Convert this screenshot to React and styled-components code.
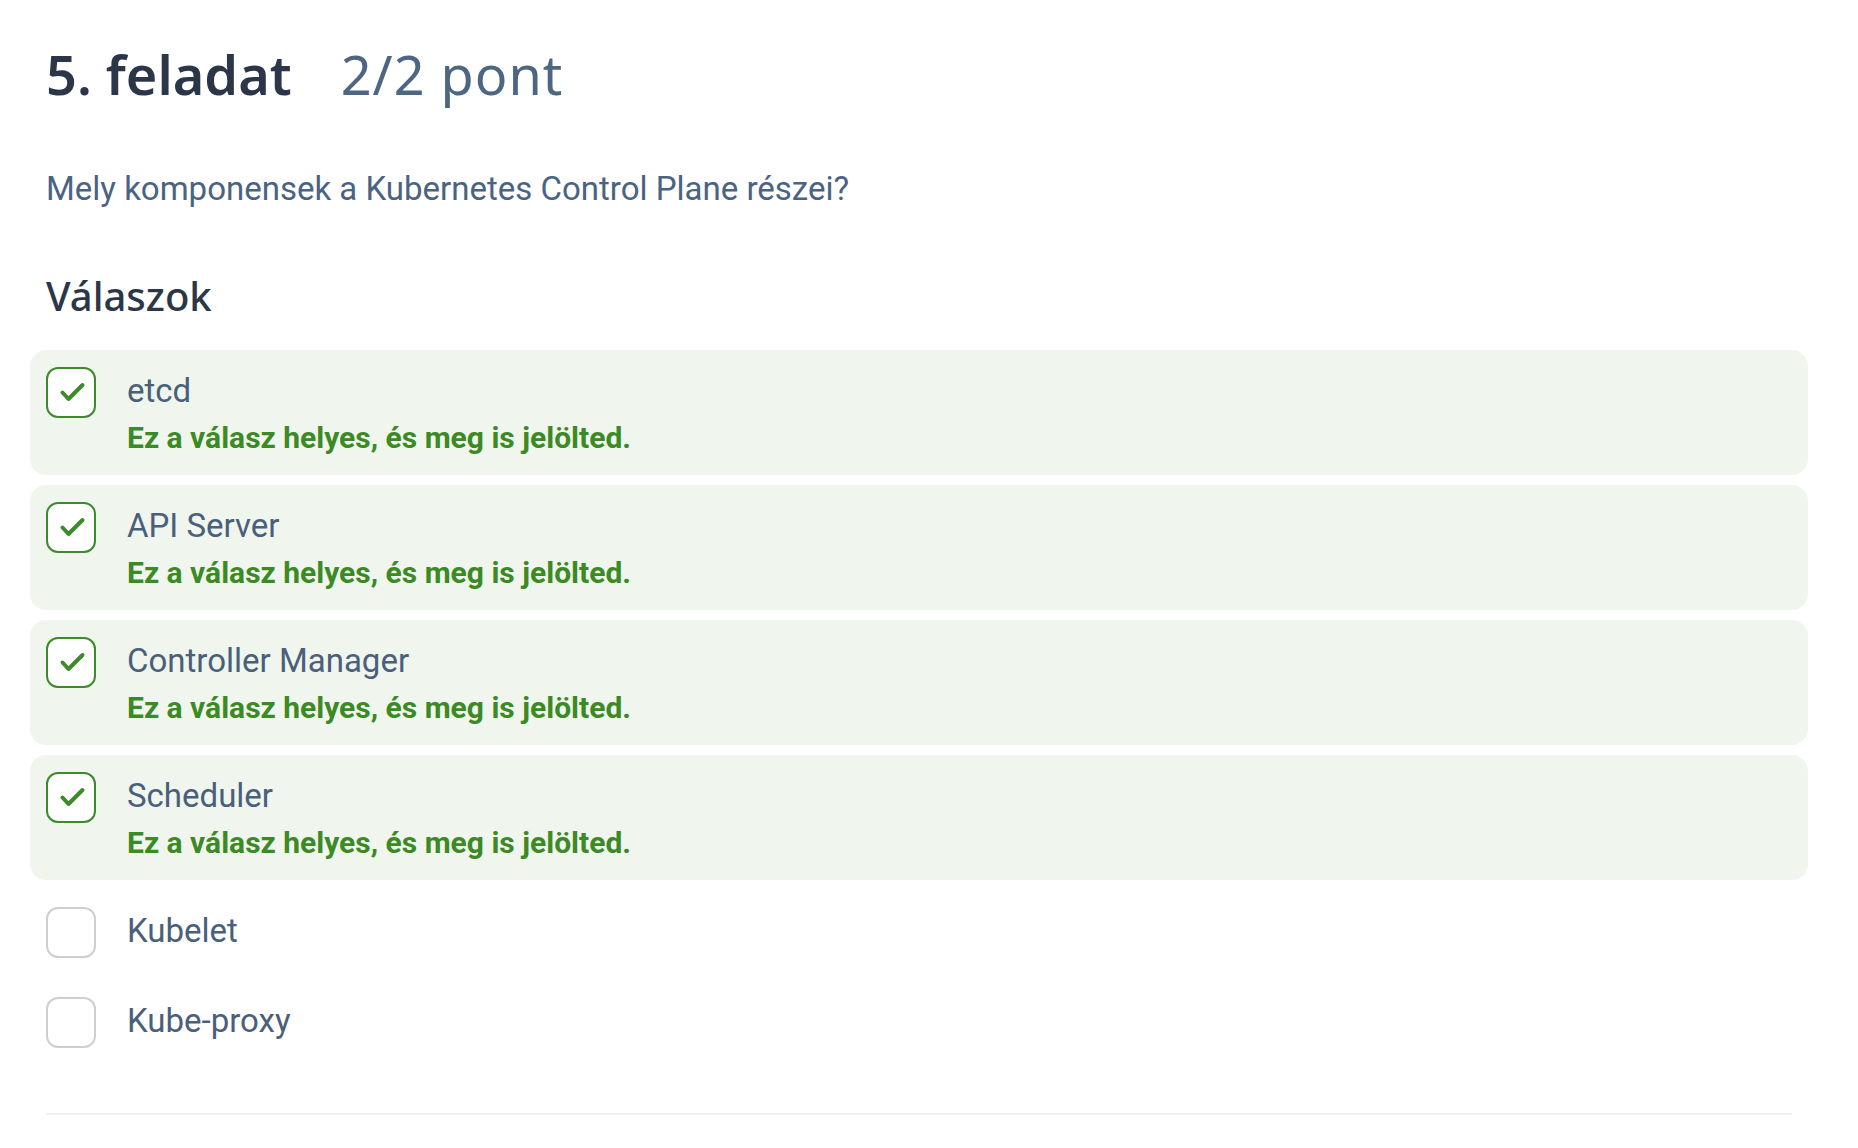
import React from "react";
import styled, { createGlobalStyle } from "styled-components";

const Global = createGlobalStyle`
  html, body { margin: 0; padding: 0; background: #ffffff; }
  body { font-family: Roboto, "Liberation Sans", sans-serif; }
`;

const Page = styled.main`
  padding: 29px 66px 0 46px;
  display: flex;
  flex-direction: column;
`;

const TitleRow = styled.h1`
  margin: 0;
  display: flex;
  align-items: baseline;
  gap: 49px;
  font-family: "Noto Sans", "DejaVu Sans", sans-serif;
  font-size: 54px;
  line-height: 90px;
`;

const TaskNo = styled.span`
  color: #2c3649;
  font-weight: 600;
`;

const Points = styled.span`
  color: #4d6681;
  font-weight: 400;
  letter-spacing: 1px;
`;

const Question = styled.p`
  margin: 47px 0 0;
  color: #4a6383;
  font-size: 33px;
  line-height: 46px;
`;

const SectionTitle = styled.h2`
  margin: 54px 0 0;
  font-family: "Noto Sans", "DejaVu Sans", sans-serif;
  color: #2c3649;
  font-weight: 500;
  font-size: 40px;
  line-height: 60px;
`;

const List = styled.ul`
  list-style: none;
  margin: 24px -16px 0;
  padding: 0;
  display: flex;
  flex-direction: column;
  gap: 10px;
`;

const Row = styled.li`
  display: flex;
  align-items: flex-start;
  gap: 31px;
  padding: 15px 16px 12px;
  border-radius: 16px;
  background: ${(p) => (p.$correct ? "#f0f6ee" : "transparent")};
`;

const Box = styled.span`
  flex: none;
  box-sizing: border-box;
  width: 50px;
  height: 51px;
  margin-top: 2px;
  border-radius: 12px;
  border: 2px solid ${(p) => (p.$checked ? "#3d8a2b" : "#cfcfcf")};
  background: #ffffff;
  display: flex;
`;

const Body = styled.div`
  display: flex;
  flex-direction: column;
  padding: 2px 0 3px;
`;

const Label = styled.span`
  color: #4a5f7b;
  font-size: 33px;
  line-height: 48px;
`;

const Feedback = styled.span`
  color: #3b8a24;
  font-weight: 700;
  font-size: 30px;
  line-height: 45px;
`;

const Divider = styled.hr`
  margin: 53px 0 0;
  border: none;
  height: 2px;
  background: #f0f0f0;
`;

const Check = () => (
  <svg width="46" height="47" viewBox="2 2 46 47" fill="none">
    <polyline
      points="16.5,25.5 22.5,32 36.5,18"
      stroke="#3d8a2b"
      strokeWidth="4"
      strokeLinecap="round"
      strokeLinejoin="round"
    />
  </svg>
);

const answers = [
  { label: "etcd", checked: true },
  { label: "API Server", checked: true },
  { label: "Controller Manager", checked: true },
  { label: "Scheduler", checked: true },
  { label: "Kubelet", checked: false },
  { label: "Kube-proxy", checked: false },
];

export default function App() {
  return (
    <>
      <Global />
      <Page>
        <TitleRow>
          <TaskNo>5. feladat</TaskNo>
          <Points>2/2 pont</Points>
        </TitleRow>
        <Question>Mely komponensek a Kubernetes Control Plane részei?</Question>
        <SectionTitle>Válaszok</SectionTitle>
        <List>
          {answers.map((a) => (
            <Row key={a.label} $correct={a.checked}>
              <Box $checked={a.checked}>{a.checked && <Check />}</Box>
              <Body>
                <Label>{a.label}</Label>
                {a.checked && (
                  <Feedback>Ez a válasz helyes, és meg is jelölted.</Feedback>
                )}
              </Body>
            </Row>
          ))}
        </List>
        <Divider />
      </Page>
    </>
  );
}
